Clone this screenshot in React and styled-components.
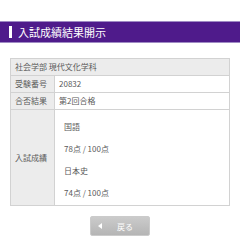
import React from "react";
import styled, { createGlobalStyle } from "styled-components";

const Global = createGlobalStyle`
  body {
    margin: 0;
    background: #fff;
    font-family: "Noto Sans CJK JP", "Noto Sans", sans-serif;
  }
`;

const Page = styled.div`
  width: 240px;
  padding-top: 21px;
`;

const Title = styled.h1`
  display: flex;
  align-items: center;
  gap: 6px;
  margin: 0;
  height: 20px;
  padding-left: 9px;
  background: #4f1b8b;
  border-top: 1px solid #9f8bc4;
  border-bottom: 1px solid #9f8bc4;
  color: #fff;
  font-size: 11px;
  font-weight: 400;
  &::before {
    content: "";
    width: 3px;
    height: 12px;
    background: #fff;
  }
`;

const Table = styled.table`
  margin: 15px 10px 0;
  width: 220px;
  border-collapse: collapse;
  border: 1px solid #c8c8c8;
  font-size: 8px;
  color: #5a5a5a;
`;

const Cell = styled.td`
  border: 1px solid #d2d2d2;
  padding: 2px 4px;
  line-height: 12px;
  background: ${(p) => (p.head ? "#ececec" : "#fff")};
  width: ${(p) => (p.label ? "35px" : "auto")};
  white-space: nowrap;
  vertical-align: middle;
`;

const Scores = styled.div`
  display: flex;
  flex-direction: column;
  gap: 10px;
  padding: 9px 0 4px 5px;
`;

const Line = styled.div`
  line-height: 12px;
`;

const ButtonRow = styled.div`
  display: flex;
  justify-content: center;
  margin-top: 10px;
`;

const Back = styled.button`
  display: flex;
  align-items: center;
  width: 60px;
  height: 20px;
  padding: 0 0 0 7px;
  border: 1px solid #cbcbcb;
  border-radius: 2px;
  background: linear-gradient(#cbcbcb, #b5b5b5);
  color: #fff;
  font-family: inherit;
  font-size: 8px;
  gap: 15px;
  &::before {
    content: "";
    border-style: solid;
    border-width: 3px 4px 3px 0;
    border-color: transparent #fff transparent transparent;
  }
`;

export default function App() {
  return (
    <Page>
      <Global />
      <Title>入試成績結果開示</Title>
      <Table>
        <tbody>
          <tr>
            <Cell head colSpan={2}>社会学部 現代文化学科</Cell>
          </tr>
          <tr>
            <Cell head label>受験番号</Cell>
            <Cell>20832</Cell>
          </tr>
          <tr>
            <Cell head label>合否結果</Cell>
            <Cell>第2回合格</Cell>
          </tr>
          <tr>
            <Cell head label>入試成績</Cell>
            <Cell>
              <Scores>
                <Line>国語</Line>
                <Line>78点 / 100点</Line>
                <Line>日本史</Line>
                <Line>74点 / 100点</Line>
              </Scores>
            </Cell>
          </tr>
        </tbody>
      </Table>
      <ButtonRow>
        <Back>戻る</Back>
      </ButtonRow>
    </Page>
  );
}
